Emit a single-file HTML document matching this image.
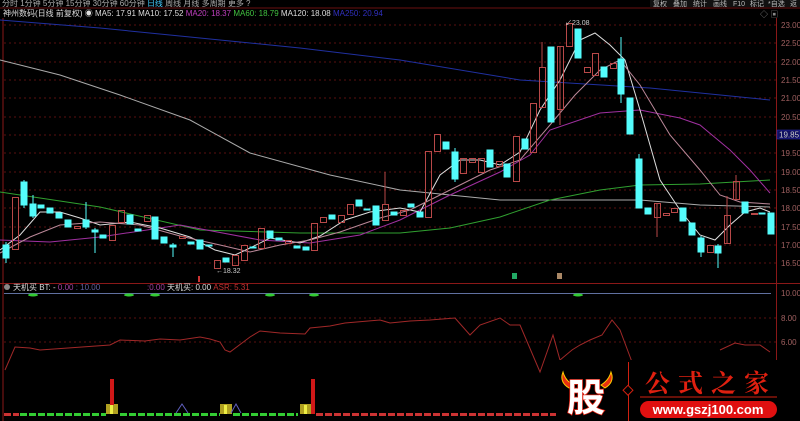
<!DOCTYPE html>
<html><head><meta charset="utf-8"><style>
body{margin:0;background:#000;width:800px;height:421px;overflow:hidden;font-family:"Liberation Sans","Noto Sans CJK SC",sans-serif}
svg{display:block}
</style></head><body>
<svg width="800" height="421" viewBox="0 0 800 421" xmlns="http://www.w3.org/2000/svg" font-family="Liberation Sans, Noto Sans CJK SC, sans-serif">
<rect width="800" height="421" fill="#000"/>
<text x="2" y="6" font-size="8" fill="#aaa">分时  1分钟  5分钟  15分钟  30分钟  60分钟  <tspan fill="#4cf">日线</tspan>  周线  月线  多周期  更多 ?</text>
<line x1="0" y1="8" x2="800" y2="8" stroke="#6a1010"/>
<g font-size="7" fill="#bbb">
<rect x="650" y="0" width="150" height="7" fill="#111"/>
<text x="653" y="6">复权</text><text x="673" y="6">叠加</text><text x="693" y="6">统计</text><text x="713" y="6">画线</text><text x="733" y="6">F10</text><text x="750" y="6">标记</text><text x="768" y="6">*自选</text><text x="790" y="6">返</text>
</g>
<text x="3" y="16" font-size="8" fill="#ddd">神州数码(日线 前复权) ◉  MA5: 17.91  MA10: 17.52  <tspan fill="#c040c0">MA20: 18.37</tspan>  <tspan fill="#40c040">MA60: 18.79</tspan>  MA120: 18.08  <tspan fill="#3030c0">MA250: 20.94</tspan></text>
<text x="760" y="17" font-size="8" fill="#888">◇ ▣</text>
<line x1="3" y1="18" x2="3" y2="421" stroke="#8a1818"/>
<line x1="776.5" y1="18" x2="776.5" y2="421" stroke="#8a1818"/>
<line x1="0" y1="283.5" x2="800" y2="283.5" stroke="#8a1818"/>
<g stroke="#5a1010" stroke-dasharray="2,3">
<line x1="4" x2="776" y1="25" y2="25"/><line x1="4" x2="776" y1="43" y2="43"/><line x1="4" x2="776" y1="62" y2="62"/><line x1="4" x2="776" y1="80" y2="80"/><line x1="4" x2="776" y1="98" y2="98"/><line x1="4" x2="776" y1="117" y2="117"/><line x1="4" x2="776" y1="135" y2="135"/><line x1="4" x2="776" y1="153" y2="153"/><line x1="4" x2="776" y1="172" y2="172"/><line x1="4" x2="776" y1="190" y2="190"/><line x1="4" x2="776" y1="208" y2="208"/><line x1="4" x2="776" y1="227" y2="227"/><line x1="4" x2="776" y1="245" y2="245"/><line x1="4" x2="776" y1="263" y2="263"/>
<line x1="4" x2="776" y1="318" y2="318"/><line x1="4" x2="776" y1="342" y2="342"/>
</g>
<g font-size="8" fill="#a06060">
<text x="781" y="28">23.00</text><text x="781" y="46">22.50</text><text x="781" y="65">22.00</text><text x="781" y="83">21.50</text><text x="781" y="101">21.00</text><text x="781" y="120">20.50</text><text x="781" y="156">19.50</text><text x="781" y="175">19.00</text><text x="781" y="193">18.50</text><text x="781" y="211">18.00</text><text x="781" y="230">17.50</text><text x="781" y="248">17.00</text><text x="781" y="266">16.50</text>
<text x="781" y="296">10.00</text><text x="781" y="321">8.00</text><text x="781" y="345">6.00</text>
</g>
<rect x="777" y="130" width="23" height="9" fill="#101060" stroke="#3030c0" stroke-width="0.5"/>
<text x="779" y="137.5" font-size="8" fill="#ccc">19.85</text>
<g fill="none" stroke-width="1">
<polyline stroke="#2030a0" points="0,20 100,28 200,38 300,48 400,60 520,80 650,88 770,100"/>
<polyline stroke="#aaa" points="0,60 60,75 120,95 190,120 250,153 330,175 400,190 500,200 640,200 700,205 770,207"/>
<polyline stroke="#30a030" points="0,192 100,207 200,230 300,233 400,233 450,228 500,217 550,200 600,190 640,185 700,184 770,180"/>
<polyline stroke="#a030a0" points="0,240 50,242 100,237 180,225 260,240 310,243 360,235 400,220 450,195 500,172 530,155 550,130 600,113 640,110 680,118 700,125 730,150 750,170 770,193"/>
<polyline stroke="#ddd" points="0,250 20,235 40,212 60,212 80,218 100,225 130,222 160,228 190,237 215,250 235,255 250,248 270,238 300,243 320,236 345,220 370,212 400,208 420,212 440,175 460,160 480,160 500,165 520,152 540,110 560,80 580,40 595,33 610,45 625,60 640,110 660,180 680,210 700,235 715,240 730,225 745,212 760,208 770,212"/>
<polyline stroke="#b89" points="0,253 30,237 60,225 100,222 140,225 180,236 220,245 250,252 280,245 310,240 340,232 380,218 410,210 430,200 460,185 490,170 520,160 550,125 575,95 600,70 620,60 640,85 670,135 700,170 720,195 740,202 770,204"/>
</g>
<g stroke-width="1">
<g stroke="#54fcfc" fill="#54fcfc">
<line x1="6" y1="242" x2="6" y2="263"/><rect x="3" y="245" width="6" height="13"/>
<line x1="24" y1="180" x2="24" y2="208"/><rect x="21" y="182" width="6" height="23"/>
<line x1="33" y1="195" x2="33" y2="218"/><rect x="30" y="204" width="6" height="12"/>
<rect x="38" y="205" width="6" height="3"/><rect x="47" y="208" width="6" height="5"/><rect x="56" y="213" width="6" height="5"/><rect x="65" y="220" width="6" height="7"/>
<line x1="86" y1="202" x2="86" y2="229"/><rect x="83" y="220" width="6" height="7"/>
<line x1="95" y1="228" x2="95" y2="253"/><rect x="92" y="230" width="6" height="2"/>
<rect x="100" y="235" width="6" height="3"/><rect x="127" y="215" width="6" height="9"/><rect x="135" y="229" width="6" height="2"/>
<rect x="152" y="217" width="6" height="22"/><rect x="161" y="237" width="6" height="6"/>
<line x1="173" y1="243" x2="173" y2="257"/><rect x="170" y="245" width="6" height="2"/>
<rect x="188" y="242" width="6" height="2"/><rect x="197" y="240" width="6" height="9"/><rect x="206" y="245" width="6" height="1"/>
<rect x="223" y="258" width="6" height="4"/><rect x="250" y="247" width="6" height="1"/><rect x="267" y="231" width="6" height="7"/><rect x="276" y="238" width="6" height="2"/>
<rect x="294" y="246" width="6" height="2"/><rect x="303" y="247" width="6" height="3"/><rect x="329" y="215" width="6" height="4"/>
<rect x="356" y="200" width="6" height="6"/><rect x="364" y="209" width="6" height="1"/><rect x="373" y="206" width="6" height="19"/><rect x="391" y="212" width="6" height="3"/>
<rect x="408" y="204" width="6" height="3"/><rect x="417" y="212" width="6" height="5"/><rect x="443" y="142" width="6" height="7"/>
<line x1="455" y1="148" x2="455" y2="182"/><rect x="452" y="152" width="6" height="27"/>
<rect x="487" y="150" width="6" height="17"/><rect x="504" y="164" width="6" height="13"/><rect x="522" y="139" width="6" height="10"/>
<rect x="548" y="47" width="6" height="75"/><rect x="575" y="29" width="6" height="29"/><rect x="601" y="67" width="6" height="10"/>
<line x1="621" y1="37" x2="621" y2="103"/><rect x="618" y="59" width="6" height="35"/>
<rect x="627" y="98" width="6" height="36"/>
<line x1="639" y1="154" x2="639" y2="208"/><rect x="636" y="159" width="6" height="49"/>
<rect x="645" y="208" width="6" height="6"/><rect x="680" y="208" width="6" height="13"/><rect x="689" y="223" width="6" height="12"/>
<line x1="701" y1="236" x2="701" y2="257"/><rect x="698" y="238" width="6" height="14"/>
<line x1="718" y1="244" x2="718" y2="268"/><rect x="715" y="246" width="6" height="7"/>
<rect x="742" y="202" width="6" height="11"/><rect x="759" y="213" width="6" height="1"/>
<rect x="768" y="213" width="6" height="21"/>
</g>
<g stroke="#b84848" fill="none">
<rect x="12.5" y="197.5" width="6" height="52"/><rect x="74.5" y="226.5" width="6" height="2"/><rect x="109.5" y="225.5" width="6" height="15"/>
<rect x="118.5" y="210.5" width="6" height="12"/><rect x="144.5" y="215.5" width="6" height="6"/><rect x="179.5" y="236.5" width="6" height="2"/>
<rect x="214.5" y="260.5" width="6" height="8"/><rect x="232.5" y="255.5" width="6" height="10"/><rect x="241.5" y="245.5" width="6" height="15"/>
<rect x="258.5" y="228.5" width="6" height="20"/><rect x="285.5" y="240.5" width="6" height="3"/><rect x="311.5" y="223.5" width="6" height="27"/>
<rect x="320.5" y="217.5" width="6" height="5"/><rect x="338.5" y="215.5" width="6" height="7"/><rect x="347.5" y="204.5" width="6" height="10"/>
<line x1="385" y1="172" x2="385" y2="204"/><rect x="382.5" y="204.5" width="6" height="16"/><rect x="400.5" y="210.5" width="6" height="5"/>
<rect x="425.5" y="151.5" width="6" height="66"/><rect x="434.5" y="134.5" width="6" height="17"/><rect x="460.5" y="158.5" width="6" height="15"/>
<rect x="469.5" y="158.5" width="6" height="4"/><rect x="478.5" y="158.5" width="6" height="14"/><rect x="496.5" y="161.5" width="6" height="5"/>
<rect x="513.5" y="136.5" width="6" height="45"/><rect x="530.5" y="103.5" width="6" height="49"/>
<line x1="542" y1="42" x2="542" y2="67"/><rect x="539.5" y="67.5" width="6" height="40"/>
<line x1="560" y1="46" x2="560" y2="125"/><rect x="557.5" y="46.5" width="6" height="63"/>
<rect x="566.5" y="23.5" width="6" height="23"/><rect x="584.5" y="67.5" width="6" height="5"/><rect x="592.5" y="53.5" width="6" height="22"/>
<rect x="610.5" y="63.5" width="6" height="5"/><line x1="657" y1="203" x2="657" y2="237"/><rect x="654.5" y="203.5" width="6" height="14"/>
<rect x="663.5" y="213.5" width="6" height="2"/><rect x="671.5" y="208.5" width="6" height="4"/><rect x="707.5" y="245.5" width="6" height="7"/>
<line x1="727" y1="196" x2="727" y2="243"/><rect x="724.5" y="215.5" width="6" height="28"/>
<line x1="736" y1="175" x2="736" y2="199"/><rect x="733.5" y="181.5" width="6" height="18"/><rect x="751.5" y="213.5" width="6" height="1"/>
</g>
</g>
<text x="565" y="25" font-size="7" fill="#ccc">↙23.08</text>
<text x="216" y="273" font-size="7" fill="#ccc">←18.32</text>
<rect x="198" y="276" width="2" height="6" fill="#c33"/>
<rect x="512" y="273" width="5" height="6" fill="#2a6"/><rect x="557" y="273" width="5" height="6" fill="#a86"/>
<circle cx="7" cy="287" r="3" fill="#888"/>
<text x="13" y="290" font-size="8" fill="#ddd">天机买   BT: -   <tspan fill="#a040a0">0.00</tspan> <tspan fill="#6060a0">: 10.00</tspan></text>
<text x="147" y="290" font-size="8" fill="#a040a0">:0.00 <tspan fill="#ddd">天机买: 0.00</tspan> <tspan fill="#c03030">ASR: 5.31</tspan></text>
<line x1="4" y1="293.5" x2="771" y2="293.5" stroke="#6070a0"/>
<g fill="#3c3">
<ellipse cx="33" cy="295" rx="5" ry="1.5"/><ellipse cx="129" cy="295" rx="5" ry="1.5"/><ellipse cx="155" cy="295" rx="5" ry="1.5"/><ellipse cx="270" cy="295" rx="5" ry="1.5"/><ellipse cx="314" cy="295" rx="5" ry="1.5"/><ellipse cx="578" cy="295" rx="5" ry="1.5"/>
</g>
<polyline fill="none" stroke="#a02828" points="5,370 15,347 30,348 40,350 110,345 120,340 145,341 160,339 180,340 200,337 210,339 220,342 225,350 230,352 250,337 260,331 280,333 305,334 310,328 330,326 345,323 380,320 390,323 410,321 430,320 455,318 470,335 480,325 500,318 510,325 520,325 540,372 553,335 560,360 572,350 580,345 590,340 602,335 612,320 620,330 632,362 640,385"/>
<polyline fill="none" stroke="#a02828" points="720,350 735,343 745,345 760,345 770,352"/>
<g stroke-width="3" stroke-dasharray="7,2">
<line x1="20" y1="414.5" x2="106" y2="414.5" stroke="#3c3"/>
<line x1="120" y1="414.5" x2="220" y2="414.5" stroke="#3c3"/>
<line x1="233" y1="414.5" x2="298" y2="414.5" stroke="#3c3"/>
<line x1="4" y1="414.5" x2="19" y2="414.5" stroke="#c33"/>
<line x1="316" y1="414.5" x2="556" y2="414.5" stroke="#c33"/>
</g>
<g fill="#b0a020"><rect x="106" y="404" width="12" height="10"/><rect x="220" y="404" width="12" height="10"/><rect x="300" y="404" width="12" height="10"/></g>
<g fill="#ee4"><rect x="110" y="405" width="3" height="9"/><rect x="224" y="405" width="3" height="9"/><rect x="304" y="405" width="3" height="9"/></g>
<g fill="#d01818"><rect x="110" y="379" width="4" height="26"/><rect x="311" y="379" width="4" height="35"/></g>
<polyline fill="none" stroke="#6060c0" points="176,413 182,404 188,413"/>
<polyline fill="none" stroke="#6060c0" points="231,413 236,404 241,413"/>
<rect x="556" y="360" width="221" height="61" fill="#000"/>
<path d="M563,372 q-4,10 6,16 l4,-3 q-8,-5 -10,-13z" fill="#e83010" stroke="#fc0" stroke-width="1"/>
<path d="M611,372 q4,10 -6,16 l-4,-3 q8,-5 10,-13z" fill="#e83010" stroke="#fc0" stroke-width="1"/>
<text x="567" y="411" font-size="38" font-weight="bold" fill="#fff" stroke="#e02010" stroke-width="1.5" paint-order="stroke">股</text>
<line x1="628.5" y1="362" x2="628.5" y2="421" stroke="#d02010"/>
<rect x="624" y="387" width="7" height="7" fill="#000" stroke="#d02010" transform="rotate(45 628 391)"/>
<text x="645" y="392" font-size="25" font-weight="bold" fill="#e02010" letter-spacing="8" font-family="Noto Serif CJK SC, Noto Sans CJK SC, serif">公式之家</text>
<line x1="640" y1="397" x2="777" y2="397" stroke="#d02010"/>
<rect x="640" y="401" width="137" height="17" rx="8.5" fill="#e01010"/>
<text x="708" y="414" font-size="13" font-weight="bold" fill="#fff" text-anchor="middle">www.gszj100.com</text>
</svg>
</body></html>
